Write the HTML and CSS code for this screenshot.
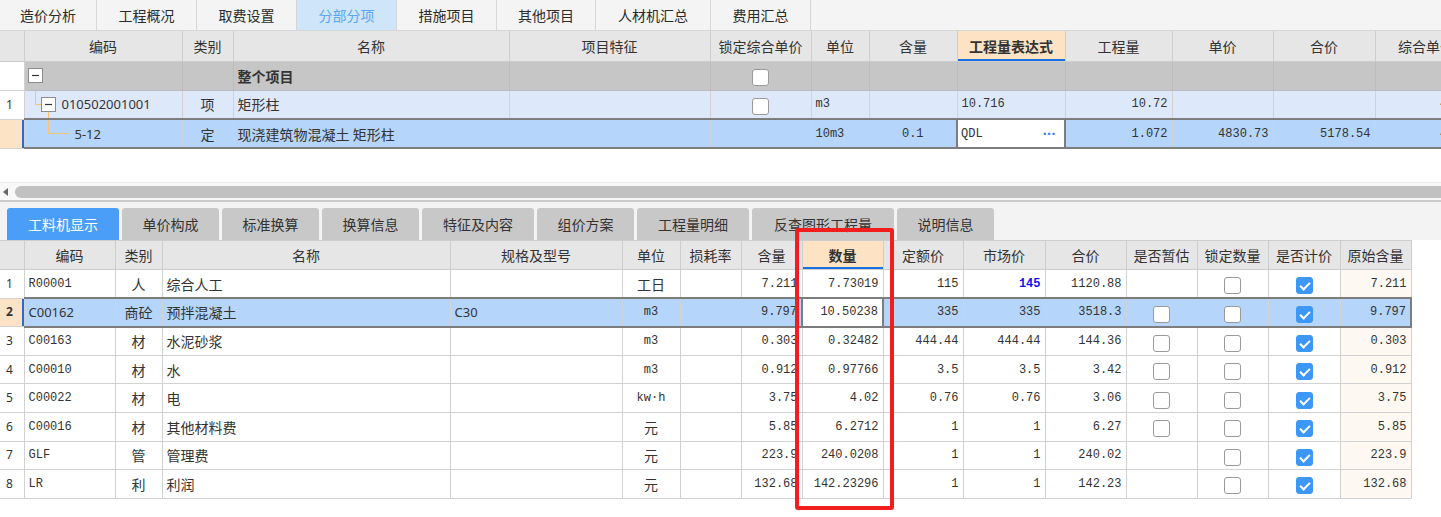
FILE: index.html
```html
<!DOCTYPE html>
<html lang="zh">
<head>
<meta charset="utf-8">
<title>分部分项</title>
<link rel="stylesheet" href="styles.css">
</head>
<body>
<div class="page">
  <div class="topbar">
    <div class="ttab w97">造价分析</div>
    <div class="ttab">工程概况</div>
    <div class="ttab">取费设置</div>
    <div class="ttab active">分部分项</div>
    <div class="ttab">措施项目</div>
    <div class="ttab w99">其他项目</div>
    <div class="ttab w115">人材机汇总</div>
    <div class="ttab">费用汇总</div>
  </div>

  <div class="upper">
    <table class="grid up">
      <colgroup>
        <col style="width:24px"><col style="width:158px"><col style="width:51px"><col style="width:276px">
        <col style="width:201px"><col style="width:101px"><col style="width:58px"><col style="width:88px">
        <col style="width:108px"><col style="width:107px"><col style="width:101px"><col style="width:102px">
        <col style="width:120px">
      </colgroup>
      <thead>
        <tr>
          <th></th><th>编码</th><th>类别</th><th>名称</th><th>项目特征</th><th>锁定综合单价</th>
          <th>单位</th><th>含量</th><th class="hl">工程量表达式</th><th>工程量</th><th>单价</th><th>合价</th><th class="shift">综合单价</th>
        </tr>
      </thead>
      <tbody>
        <tr class="whole">
          <td class="rn"></td>
          <td class="tc"><div class="tree">
            <svg width="36" height="28" viewBox="0 0 36 28"><rect x="3.5" y="6.5" width="14" height="14" fill="#fff" stroke="#8c8c8c"/><line x1="7" y1="13.5" x2="14" y2="13.5" stroke="#333" stroke-width="1.2"/><line x1="10.5" y1="21" x2="10.5" y2="28" stroke="#f3c27c"/></svg>
          </div></td>
          <td></td><td class="b">整个项目</td><td></td><td class="c"><span class="cb"></span></td>
          <td></td><td></td><td></td><td></td><td></td><td></td><td></td>
        </tr>
        <tr class="lvl1">
          <td class="rn">1</td>
          <td class="tc"><div class="tree">
            <svg width="36" height="28" viewBox="0 0 36 28"><path d="M10.5 0 V14.5 H16" fill="none" stroke="#f3c27c"/><rect x="16.5" y="7.5" width="14" height="14" fill="#fff" stroke="#8c8c8c"/><line x1="20" y1="14.5" x2="27" y2="14.5" stroke="#333" stroke-width="1.2"/><line x1="23.5" y1="22" x2="23.5" y2="28" stroke="#f3c27c"/></svg>
            <span class="sans">010502001001</span>
          </div></td>
          <td class="c">项</td><td>矩形柱</td><td></td><td class="c"><span class="cb"></span></td>
          <td class="m">m3</td><td></td><td class="m">10.716</td><td class="m r">10.72</td><td></td><td></td><td class="m r">4830.73</td>
        </tr>
        <tr class="sel">
          <td class="rn selrn"></td>
          <td class="tc"><div class="tree">
            <svg width="48" height="28" viewBox="0 0 48 28"><path d="M23.5 0 V13.5 H44" fill="none" stroke="#f3c27c"/></svg>
            <span class="sans code2">5-12</span>
          </div></td>
          <td class="c">定</td><td>现浇建筑物混凝土 矩形柱</td><td></td><td></td>
          <td class="m">10m3</td><td class="m c">0.1</td>
          <td class="m edit"><div class="editbox"><span>QDL</span><span class="dots">···</span></div></td>
          <td class="m r">1.072</td><td class="m r">4830.73</td><td class="m r">5178.54</td><td class="m r">4830.73</td>
        </tr>
      </tbody>
    </table>
  </div>

  <div class="hscroll">
    <span class="arrow"></span>
    <div class="thumb"></div>
  </div>

  <div class="btabs">
    <div class="btab active w112">工料机显示</div>
    <div class="btab">单价构成</div>
    <div class="btab">标准换算</div>
    <div class="btab">换算信息</div>
    <div class="btab w112">特征及内容</div>
    <div class="btab">组价方案</div>
    <div class="btab w112">工程量明细</div>
    <div class="btab w142">反查图形工程量</div>
    <div class="btab">说明信息</div>
  </div>

  <table class="grid low">
    <colgroup>
      <col style="width:24px"><col style="width:91px"><col style="width:47px"><col style="width:288px">
      <col style="width:172px"><col style="width:58px"><col style="width:61px"><col style="width:61px">
      <col style="width:81px"><col style="width:80px"><col style="width:82px"><col style="width:81px">
      <col style="width:71px"><col style="width:71px"><col style="width:72px"><col style="width:71px">
    </colgroup>
    <thead>
      <tr>
        <th></th><th>编码</th><th>类别</th><th>名称</th><th>规格及型号</th><th>单位</th><th>损耗率</th><th>含量</th>
        <th class="hl">数量</th><th>定额价</th><th>市场价</th><th>合价</th><th>是否暂估</th><th>锁定数量</th><th>是否计价</th><th>原始含量</th>
      </tr>
    </thead>
    <tbody>
      <tr>
        <td class="rn">1</td><td class="m">R00001</td><td class="c">人</td><td>综合人工</td><td></td><td class="c">工日</td><td></td>
        <td class="m r">7.211</td><td class="m r">7.73019</td><td class="m r">115</td><td class="m r blue">145</td><td class="m r">1120.88</td>
        <td></td><td class="c"><span class="cb"></span></td><td class="c"><span class="cb on"></span></td><td class="m r orig">7.211</td>
      </tr>
      <tr class="sel">
        <td class="rn selrn">2</td><td class="sans">C00162</td><td class="c">商砼</td><td>预拌混凝土</td><td class="sans">C30</td><td class="m c">m3</td><td></td>
        <td class="m r">9.797</td><td class="m r edit2">10.50238</td><td class="m r">335</td><td class="m r">335</td><td class="m r">3518.3</td>
        <td class="c"><span class="cb"></span></td><td class="c"><span class="cb"></span></td><td class="c"><span class="cb on"></span></td><td class="m r">9.797</td>
      </tr>
      <tr>
        <td class="rn">3</td><td class="m">C00163</td><td class="c">材</td><td>水泥砂浆</td><td></td><td class="m c">m3</td><td></td>
        <td class="m r">0.303</td><td class="m r">0.32482</td><td class="m r">444.44</td><td class="m r">444.44</td><td class="m r">144.36</td>
        <td class="c"><span class="cb"></span></td><td class="c"><span class="cb"></span></td><td class="c"><span class="cb on"></span></td><td class="m r orig">0.303</td>
      </tr>
      <tr>
        <td class="rn">4</td><td class="m">C00010</td><td class="c">材</td><td>水</td><td></td><td class="m c">m3</td><td></td>
        <td class="m r">0.912</td><td class="m r">0.97766</td><td class="m r">3.5</td><td class="m r">3.5</td><td class="m r">3.42</td>
        <td class="c"><span class="cb"></span></td><td class="c"><span class="cb"></span></td><td class="c"><span class="cb on"></span></td><td class="m r orig">0.912</td>
      </tr>
      <tr>
        <td class="rn">5</td><td class="m">C00022</td><td class="c">材</td><td>电</td><td></td><td class="m c">kw·h</td><td></td>
        <td class="m r">3.75</td><td class="m r">4.02</td><td class="m r">0.76</td><td class="m r">0.76</td><td class="m r">3.06</td>
        <td class="c"><span class="cb"></span></td><td class="c"><span class="cb"></span></td><td class="c"><span class="cb on"></span></td><td class="m r orig">3.75</td>
      </tr>
      <tr>
        <td class="rn">6</td><td class="m">C00016</td><td class="c">材</td><td>其他材料费</td><td></td><td class="c">元</td><td></td>
        <td class="m r">5.85</td><td class="m r">6.2712</td><td class="m r">1</td><td class="m r">1</td><td class="m r">6.27</td>
        <td class="c"><span class="cb"></span></td><td class="c"><span class="cb"></span></td><td class="c"><span class="cb on"></span></td><td class="m r orig">5.85</td>
      </tr>
      <tr>
        <td class="rn">7</td><td class="m">GLF</td><td class="c">管</td><td>管理费</td><td></td><td class="c">元</td><td></td>
        <td class="m r">223.9</td><td class="m r">240.0208</td><td class="m r">1</td><td class="m r">1</td><td class="m r">240.02</td>
        <td></td><td class="c"><span class="cb"></span></td><td class="c"><span class="cb on"></span></td><td class="m r orig">223.9</td>
      </tr>
      <tr>
        <td class="rn">8</td><td class="m">LR</td><td class="c">利</td><td>利润</td><td></td><td class="c">元</td><td></td>
        <td class="m r">132.68</td><td class="m r">142.23296</td><td class="m r">1</td><td class="m r">1</td><td class="m r">142.23</td>
        <td></td><td class="c"><span class="cb"></span></td><td class="c"><span class="cb on"></span></td><td class="m r orig">132.68</td>
      </tr>
    </tbody>
  </table>

  <div class="redbox"></div>
</div>
</body>
</html>
```

FILE: styles.css
```css
* { box-sizing: border-box; }
html, body { margin: 0; padding: 0; background: #fff; }
body {
  font-family: "Noto Sans CJK SC", "Noto Sans", sans-serif;
  font-size: 14px;
  color: #333;
}
.page {
  position: relative;
  width: 1441px;
  height: 517px;
  overflow: hidden;
}

/* top tabs */
.topbar {
  display: flex;
  height: 31px;
  background: #f4f4f4;
  border-bottom: 1px solid #d6d6d6;
}
.ttab {
  width: 100px;
  flex: none;
  text-align: center;
  line-height: 30px;
  border-right: 1px solid #d6d6d6;
  color: #2b2b2b;
}
.ttab.w97 { width: 97px; }
.ttab.w99 { width: 99px; }
.ttab.w115 { width: 115px; }
.ttab.active { background: #cfe5fa; color: #5aa7f0; }

/* grids */
.upper { width: 1441px; overflow: hidden; height: 150px; }
.grid {
  border-collapse: collapse;
  table-layout: fixed;
}
.grid.up { width: 1475px; }
.grid.low { width: 1411px; }
.grid th, .grid td {
  border: 1px solid #d2d2d2;
  padding: 0 4px;
  white-space: nowrap;
  overflow: hidden;
  font-weight: normal;
  line-height: 20px;
}
.grid th {
  background: #e6e6e6;
  height: 30px;
  text-align: center;
  color: #333;
  border-color: #cdcdcd;
}
.grid.up th { border-top: none; }
.grid td { height: 29px; }
.grid.low th { height: 29px; }
.grid.low td { height: 28.6px; }
.grid th.hl {
  background: #fde3c4;
  font-weight: bold;
  box-shadow: inset 0 -2px 0 #1b6fe3;
}
.grid th.shift { padding-right: 22px; }

.grid td.rn {
  background: #fff;
  font-family: "Noto Sans", sans-serif;
  font-size: 12px;
  padding: 0 0 0 6px;
  color: #333;
  border-left: none;
}
.grid th:first-child { border-left: none; }
.grid td.selrn {
  background: #fde3c6;
  box-shadow: inset -2px 0 0 #1a6fe6;
  font-weight: bold;
}

.grid td.c { text-align: center; }
.grid td.r { text-align: right; }
.grid td.b { font-weight: bold; }
.m {
  font-family: "Liberation Mono", "DejaVu Sans Mono", monospace;
  font-size: 12px;
}
.sans { font-family: "Noto Sans", sans-serif; font-size: 13px; }
.grid td.blue { color: #1010f5; font-weight: bold; }

/* upper rows */
.up tr.whole td { background: #c6c6c6; border-color: #bcbcbc; }
.up tr.whole td.rn { background: #fff; border-color: #d2d2d2; }
.up tr.lvl1 td { background: #dde9fb; }
.up tr.lvl1 td.rn { background: #fff; }
.grid tr.sel td {
  background: #b5d5fa;
  border-top: 2px solid #7d7d7d;
  border-bottom: 2px solid #7d7d7d;
}
.grid tr.sel td.rn { background: #fde3c6; border-top: 1px solid #d2d2d2; border-bottom: 1px solid #d2d2d2; }
.grid tr.sel td:last-child { border-right: 2px solid #7d7d7d; }
.up tr.sel td:last-child { border-right: 1px solid #d2d2d2; }

.grid td.tc { padding: 0; }
.tree {
  display: flex;
  align-items: center;
  height: 27px;
}
.tree svg { flex: none; display: block; }
.tree .sans { margin-left: 1px; }
.tree .code2 { margin-left: 2px; }

.grid tr.sel td.edit { background: #fff; padding: 0 8px 0 3px; border: 2px solid #7d7d7d; }
.editbox { display: flex; justify-content: space-between; align-items: center; }
.dots { color: #2f7ee6; font-family: "Noto Sans", sans-serif; font-size: 14px; font-weight: bold; letter-spacing: 0.5px; }

.grid.low tr.sel td.edit2 { background: #fff; border-left: 2px solid #7d7d7d; border-right: 2px solid #7d7d7d; }

/* checkboxes */
.cb {
  display: inline-block;
  width: 17px;
  height: 17px;
  vertical-align: middle;
  background: #fff;
  border: 1px solid #9a9a9a;
  border-radius: 3px;
}
.cb.on {
  background: #3d97f6;
  border-color: #3d97f6;
  position: relative;
}
.cb.on::after {
  content: "";
  position: absolute;
  left: 5px;
  top: 2px;
  width: 4px;
  height: 8px;
  border: solid #fff;
  border-width: 0 2px 2px 0;
  transform: rotate(45deg);
}

/* scrollbar */
.hscroll {
  margin-top: 1px;
  height: 20px;
  background: #f8f8f8;
  border-top: 1px solid #ececec;
  border-bottom: 2px solid #cbcbcb;
  display: flex;
  align-items: center;
  padding-left: 3px;
}
.arrow {
  width: 0; height: 0;
  border-top: 4px solid transparent;
  border-bottom: 4px solid transparent;
  border-right: 5px solid #666;
  margin-right: 7px;
}
.thumb {
  flex: 1;
  height: 12px;
  margin-right: -10px;
  background: #c1c1c1;
  border-radius: 6px;
}

/* bottom tabs */
.btabs {
  display: flex;
  gap: 3px;
  padding: 6px 0 0 7px;
  height: 38px;
  background: #f3f3f3;
}
.btab {
  width: 97px;
  flex: none;
  background: #c8c8c8;
  border-radius: 3px 3px 0 0;
  text-align: center;
  line-height: 32px;
  color: #333;
}
.btab.w112 { width: 112px; }
.btab.w142 { width: 142px; }
.btab.active { background: #4a9ef7; color: #fff; }

.low td.orig { background: #fdf9f2; }

.redbox {
  position: absolute;
  left: 795px;
  top: 228px;
  width: 99px;
  height: 282px;
  border: 4px solid #f21d1d;
  border-radius: 3px;
}
```
